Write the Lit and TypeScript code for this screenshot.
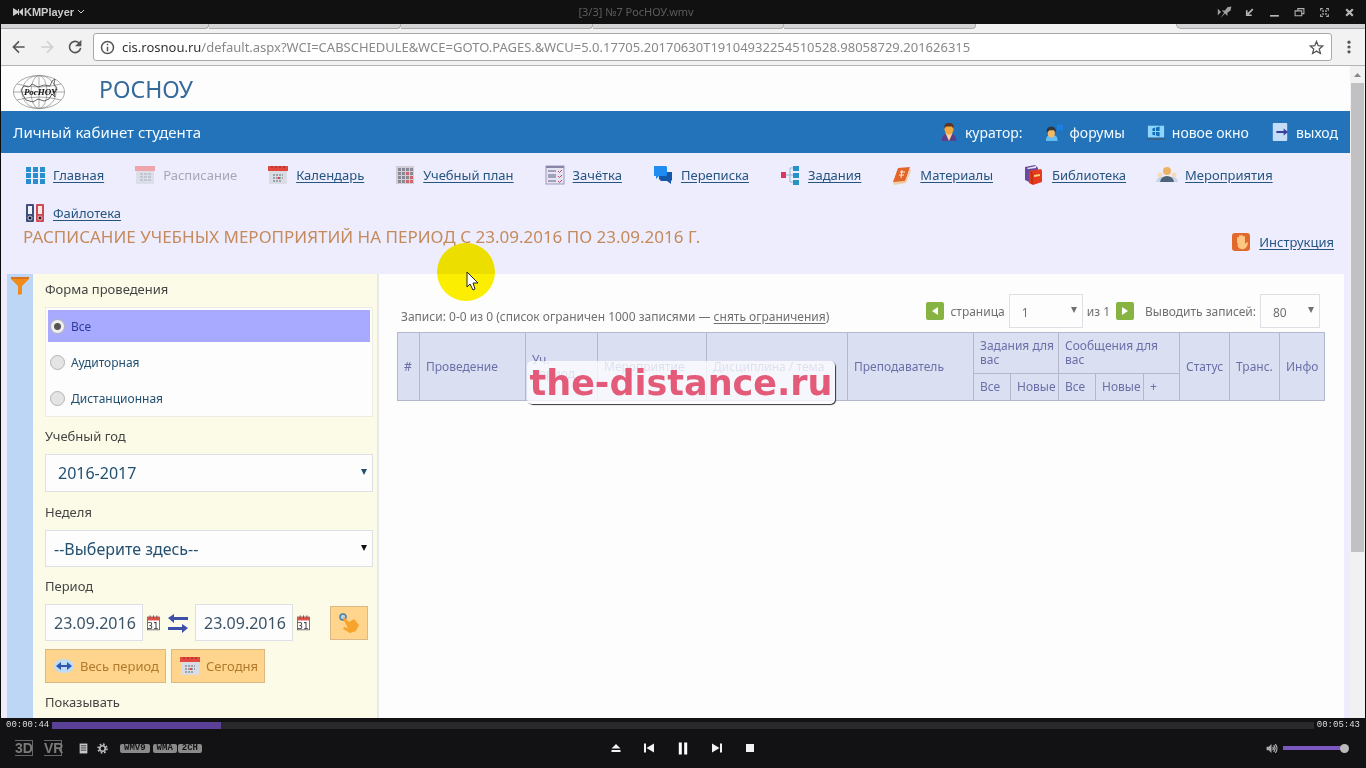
import { LitElement, html, svg, css } from "lit";
import { customElement, property, state } from "lit/decorators.js";
import { classMap } from "lit/directives/class-map.js";

const glyphs: Record<string, unknown> = {
  grid: svg`${[0, 1, 2].map((r) => [0, 1, 2].map((c) => svg`<rect x=${1 + c * 7} y=${2 + r * 6} width="5" height="5" fill="#2a8fd0"/>`))}`,
  schedule: svg`<rect x="1" y="5" width="18" height="14" rx="1" fill="#dcdfe8"/><path d="M0 1h20v5H0z" fill="#f0a5ab"/><path d="M5 9h11M5 12h11M5 15h11" stroke="#c2c6d2" stroke-width="2" stroke-dasharray="3 1"/>`,
  calendar: svg`<rect x="1" y="5" width="18" height="14" rx="1" fill="#d9dde3"/><path d="M0 1h20v5H0z" fill="#e2483d"/><path d="M4 1v2M8 1v2M12 1v2M16 1v2" stroke="#8e2b25"/><path d="M5 10h10M5 13h10M5 16h8" stroke="#9aa3ad" stroke-width="2" stroke-dasharray="2 1"/><path d="M10 12h2v2h-2z" fill="#e2483d"/>`,
  plan: svg`<rect x="1" y="1" width="18" height="18" fill="#d3ced6"/>${[0, 1, 2, 3].map((r) => [0, 1, 2, 3].map((c) => svg`<rect x=${3 + c * 4} y=${3 + r * 4} width="3" height="3" fill=${(r === 1 && c === 2) || (r === 3 && c > 1) || (r === 2 && c === 3) ? "#d06468" : "#8a8a96"}/>`))}`,
  grades: svg`<rect x="1" y="1" width="18" height="18" fill="#e6e4f2" stroke="#9f98bd"/><path d="M1 2h18" stroke="#8a84a8" stroke-width="2"/><path d="M3 6h8M3 10h8M3 12h8M3 16h8" stroke="#5f5f86"/><path d="m13 6 1.500 1.500L17 5m-4 6 1.500 1.500L17 10m-4 6 1.500 1.500L17 15" fill="none" stroke="#b54c6c"/>`,
  chat: svg`<path d="M6 7h13v8l-1 1v3l-4-3H8l-2-2z" fill="#1557a8"/><path d="M1 1h12l1 1v8l-1 1H6l-3 3v-3H1z" fill="#1e8cf0"/>`,
  tasks: svg`<rect x="1" y="7" width="5" height="6" fill="#e0335f"/><path d="M6 10h7M10 3v14M10 3h3M10 17h3" stroke="#8fb9d6" fill="none"/><path d="M13 1h6v5h-6zm0 7h6v5h-6zm0 7h6v5h-6z" fill="#2892c4"/>`,
  materials: svg`<path d="m6 3 12-1-5 15H1z" fill="#e2662b"/><path d="m1 17 12-1 5-12 1 2-5 12-12 2z" fill="#f0cda6"/><path d="M8 7h5M7 10h5M10 5l-1 8" stroke="#fff0d8" fill="none"/>`,
  library: svg`<path d="m1 2 10-2 3 3v12L5 17 1 15z" fill="#6a4a9f"/><path d="M3 3 12 1v2L4 4z" fill="#eee"/><path d="m5 6 12-2 1 2v11l-9 3-4-2z" fill="#e63b1f"/><path d="m6 7 2 1v11" stroke="#a82613" fill="none"/><path d="m10 10 6-1v2l-6 1z" fill="#ffd27a"/>`,
  people: svg`<circle cx="3" cy="10" r="2.500" fill="#f3dcb8"/><circle cx="17" cy="10" r="2.500" fill="#f3dcb8"/><path d="M-1 17q1-5 5-5h12q4 0 5 5z" fill="#c7d5e4"/><circle cx="10" cy="6" r="4" fill="#eab464"/><path d="M3 17q1-6 7-6t7 6z" fill="#4e6378"/>`,
  binders: svg`<rect x="1" y="1" width="8" height="18" rx="1" fill="#3f4e7d"/><rect x="3" y="3" width="4" height="8" fill="#f2f2fa"/><circle cx="5" cy="15" r="2" fill="#10142a" stroke="#c8cce0"/><rect x="11" y="1" width="8" height="18" rx="1" fill="#cf4a55"/><rect x="13" y="3" width="4" height="8" fill="#fbe9e6"/><circle cx="15" cy="15" r="2" fill="#401016" stroke="#e8c8cc"/>`,
  hand: svg`<rect x="1" y="1" width="18" height="18" rx="3" fill="#e2692c"/><path d="M6 11V6q0-1 1-1t1 1v3-5q0-1 1-1t1 1v5-5q0-1 1-1t1 1v5-4q0-1 1-1t1 1v7q2-3 3-1-1 5-4 6-4 1-6-2-1-2 0-4z" fill="#ffc583"/>`,
  curator: svg`<path d="M2 20q0-7 5-8h6q5 1 5 8z" fill="#5a3f8c"/><path d="m6 11 4 9 4-9z" fill="#f9d3a0"/><ellipse cx="10" cy="7" rx="5" ry="6" fill="#f2a840"/><path d="M5 6q-1-6 5-6t5 6l-2-2H7z" fill="#5b3420"/>`,
  forum: svg`<path d="M13 2h7v6h-4l-2 2V8h-1z" fill="#1a80e0"/><path d="M1 20q0-6 4-6h5q4 0 4 6z" fill="#62bdf2"/><ellipse cx="7" cy="11" rx="4" ry="5" fill="#f5b862"/><path d="M2 11q-1-7 5-7t5 7l-2-3H5z" fill="#33363c"/>`,
  window: svg`<rect x="1" y="3" width="18" height="13" fill="#8fd4fb"/><path d="m6 6 3-1v4H6zm4-1 4-1v5h-4zm-4 5h3v4l-3-1zm4 0h4v5l-4-1z" fill="#0f6fbd"/><path d="M0 17h20l-1 2H1z" fill="#3d5f80"/>`,
  exit: svg`<rect x="2" y="0" width="16" height="20" rx="1" fill="#c3dcf8"/><path d="M6 9h8V6l5 4-5 4v-3H6z" fill="#39409b"/>`,
  filter: svg`<path d="M1 1h18v2l-7 7v8l-4 1v-9L1 3z" fill="#f08c1c"/><path d="M1 1h18v2H1z" fill="#d9741a"/>`,
  day: svg`<rect x="3" y="3" width="14" height="15" fill="#fdfdfd" stroke="#6b5a5a"/><path d="M3 3h14v4H3z" fill="#e0564c"/><path d="M6 1v4M10 1v4M14 1v4" stroke="#874040"/>`,
  swap: svg`<path d="M0 5 6 1v3h14v3H6v3zM20 15l-6-4v3H0v3h14v3z" fill="#3d50a8"/>`,
  pointer: svg`<circle cx="4" cy="4" r="3" fill="#b9d4e8" stroke="#4a7ea8" stroke-width="1.500"/><path d="m5 4 5 5 5-3 5 6-3 6-6 2-7-4 1-2 4 1-5-9z" fill="#f7a42c"/>`,
  range: svg`<ellipse cx="10" cy="10" rx="10" ry="7" fill="#bfdcf5"/><path d="m2 10 5-4v3h6V6l5 4-5 4v-3H7v3z" fill="#3156b0"/>`,
  back: svg`<path d="M17 10H4m6-7-7 7 7 7" fill="none" stroke="#555" stroke-width="2"/>`,
  forward: svg`<path d="M3 10h13m-6-7 7 7-7 7" fill="none" stroke="#d0d0d0" stroke-width="2"/>`,
  reload: svg`<path d="M15 5a7 7 0 1 0 2 6" fill="none" stroke="#555" stroke-width="2"/><path d="M18 1v8h-8z" fill="#555"/>`,
  info: svg`<circle cx="10" cy="10" r="8" fill="none" stroke="#555" stroke-width="2"/><path d="M10 5v2M10 9v6" stroke="#555" stroke-width="2"/>`,
  star: svg`<path d="m10 2 2.300 5.600 6 .5-4.600 4 1.500 5.900-5.200-3.200L4.800 18l1.500-5.900-4.600-4 6-.5z" fill="none" stroke="#555" stroke-width="1.700"/>`,
  dots: svg`<circle cx="10" cy="4" r="2" fill="#555"/><circle cx="10" cy="10" r="2" fill="#555"/><circle cx="10" cy="16" r="2" fill="#555"/>`,
  pin: svg`<path d="m1 6 4 4-4 4zM18 3l-1 5-4 3v4l-3-3-6 6 5-7-3-3h4l3-4z" fill="#a0a0a0"/>`,
  shrink: svg`<path d="M16 4 7 13M5 6v9h9" fill="none" stroke="#b8b8b8" stroke-width="3"/>`,
  min: svg`<path d="M2 16h16" stroke="#b8b8b8" stroke-width="3"/>`,
  restore: svg`<path d="M7 7V3h11v9h-4M2 7h12v9H2z" fill="none" stroke="#b0b0b0" stroke-width="2"/>`,
  full: svg`<path d="M3 7V3h4M13 3h4v4M17 13v4h-4M7 17H3v-4M7 9V7h2M11 7h2v2M13 11v2h-2M9 13H7v-2" fill="none" stroke="#a8a8a8" stroke-width="2"/>`,
  close: svg`<path d="m4 4 12 12M16 4 4 16" stroke="#b8b8b8" stroke-width="4"/>`,
  list: svg`<path d="M3 1h14v18H3z" fill="#c8c8c8"/><path d="M5 5h10M5 9h10M5 13h10" stroke="#222" stroke-width="1.500"/>`,
  gear: svg`<circle cx="10" cy="10" r="8" fill="none" stroke="#bbb" stroke-width="3" stroke-dasharray="3.140"/><circle cx="10" cy="10" r="5" fill="none" stroke="#bbb" stroke-width="3"/>`,
  eject: svg`<path d="m10 2 9 9H1zM1 14h18v4H1z" fill="#f2f2f2"/>`,
  prev: svg`<path d="M0 1h4v18H0zM20 1v18L5 10z" fill="#f2f2f2"/>`,
  pause: svg`<path d="M3 0h5v20H3zM12 0h5v20h-5z" fill="#fff"/>`,
  next: svg`<path d="M16 1h4v18h-4zM0 1v18l15-9z" fill="#f2f2f2"/>`,
  stop: svg`<path d="M2 2h16v16H2z" fill="#f2f2f2"/>`,
  sound: svg`<path d="M1 7h4l5-5v16l-5-5H1z" fill="#aaa"/><path d="M12 7q3 3 0 6M14 4q5 6 0 12M17 2q6 8 0 16" fill="none" stroke="#bbb" stroke-width="2"/>`,
};

@customElement("ui-icon")
class UiIcon extends LitElement {
  @property() name = "";
  static styles = css`
    :host { display: block; flex: none; width: 20px; height: 20px; }
    .icon { display: block; width: 100%; height: 100%; overflow: visible; }
  `;
  render() {
    return html`<svg class="icon" viewBox="0 0 20 20" aria-hidden="true">${glyphs[this.name]}</svg>`;
  }
}

@customElement("app-root")
class AppRoot extends LitElement {
  @state() private form = "Все";

  static styles = css`
    :host {
      display: flex; flex-direction: column; height: 100vh; overflow: hidden; position: relative;
      font-family: "Noto Sans", sans-serif; background: #0b0b0d; color: #444;
    }
    * { box-sizing: border-box; }
    button, input, select { font: inherit; color: inherit; margin: 0; border-radius: 0; }
    button { padding: 0; border: 0; background: none; display: flex; align-items: center; justify-content: center; }
    a { color: #245480; }

    .titlebar { display: flex; align-items: center; height: 24px; flex: none; padding: 0 4px 0 13px; background: #111; }
    .brand { display: flex; align-items: center; gap: 1px; font: bold 11px/20px "Liberation Sans", sans-serif; color: #ccc; }
    .brand-mark { width: 10px; height: 8px; }
    .brand-arrow { width: 6px; height: 4px; margin-left: 3px; }
    .file { flex: 1; text-align: center; padding-right: 24px; font: 11px/20px "Noto Sans", sans-serif; color: #5c5c5c; }
    .win { width: 25px; height: 24px; }
    .win ui-icon { width: 11px; height: 11px; }
    .win .wide { width: 16px; height: 16px; }

    .screen { flex: 1; min-height: 0; display: flex; flex-direction: column; margin: 0 1px; background: #fdfdfe; }
    .tabs { display: flex; flex: none; height: 5px; background: #f2f2f2; }
    .tab { flex: 193; background: #d3d3d5; border: 1px solid #aaa; border-width: 0 1px 1px 0; border-radius: 0 0 4px 0; }
    .tab.first { flex: 209; }
    .tab.gap { flex: 202; background: none; border: 0; }
    .tab.last { flex: 190; border-width: 0 0 1px 1px; border-radius: 0 0 0 5px; }
    .toolbar { display: flex; align-items: center; flex: none; height: 37px; padding: 0 8px 0 10px; background: #f2f2f2; border-bottom: 1px solid #b5b5b5; }
    .toolbar ui-icon { width: 16px; height: 16px; }
    .nav-btn { width: 28px; height: 28px; justify-content: flex-start; }
    .nav-btn:nth-child(3) { width: 26px; }
    .address { display: flex; align-items: center; flex: 1; height: 28px; margin-right: 9px; padding: 0 7px 0 6px; gap: 7px; background: #fff; border: 1px solid #aaa; border-radius: 3px; font-size: 13px; color: #888; }
    .address ui-icon { width: 15px; height: 15px; }
    .address-host { color: #333; }
    .url { flex: 1; white-space: nowrap; }

    .viewport { flex: 1; min-height: 0; display: flex; }
    .page { flex: 1; min-width: 0; overflow: hidden; display: flex; flex-direction: column; background: #eeedfd; }
    .scrollbar { width: 15px; flex: none; background: #f1f1f1; display: flex; flex-direction: column; align-items: center; }
    .scroll-up { width: 15px; height: 17px; }
    .scroll-arrow { width: 7px; height: 4px; }
    .thumb { width: 13px; height: 72%; background: #c1c1c4; }

    .org { display: flex; align-items: center; height: 45px; flex: none; padding-left: 12px; gap: 34px; background: #fdfdfe; }
    .org-logo { width: 52px; height: 34px; margin-top: 7px; }
    .org-mark { font: italic bold 9px "Liberation Serif", serif; }
    .org-name { margin: 0; font-size: 23px; font-weight: 400; line-height: 32px; color: #34699a; }
    .account { display: flex; align-items: center; height: 42px; flex: none; padding: 0 12px; background: #2273b9; color: #f4fbff; font-size: 15px; }
    .account-title { flex: 1; }
    .account-links { display: flex; gap: 22px; font-size: 14px; }
    .account-link { display: flex; align-items: center; gap: 7px; color: inherit; text-decoration: none; }
    .account-link ui-icon { width: 18px; height: 20px; }

    .menu { display: flex; flex-wrap: wrap; gap: 14px 31px; padding: 10px 24px 0; flex: none; }
    .menu-item { display: flex; align-items: center; gap: 8px; height: 24px; font-size: 13px; text-underline-offset: 2px; }
    .menu-item.off { color: #a7a7b4; text-decoration: none; }
    .heading { display: flex; justify-content: space-between; flex: none; height: 49px; padding: 0 16px 0 22px; }
    .heading-title { margin: 0; font-size: 17px; line-height: 24px; font-weight: 400; color: #c58a5c; }
    .help { display: flex; align-items: center; gap: 8px; height: 34px; font-size: 13px; text-underline-offset: 2px; }

    .work { flex: 1; min-height: 0; display: flex; margin: 0 6px; background: #fdfdfe; overflow: hidden; }
    .strip { width: 26px; flex: none; background: #bed6f6; align-items: flex-start; padding-top: 2px; }
    .filters { width: 346px; flex: none; padding: 4px 4px 0 12px; background: #fcfbe8; border-right: 2px solid #e8e8ea; font-size: 13px; color: #444; }
    .label { display: block; line-height: 22px; }
    .options { margin: 7px 0 8px; padding: 2px; border: 1px solid #ecece6; background: #fdfdfe; display: flex; flex-direction: column; gap: 4px; }
    .option { display: flex; align-items: center; gap: 6px; height: 32px; padding-left: 2px; font-size: 12px; color: #245070; }
    .option.on { background: #a7aafe; color: #2c3c9c; }
    .radio { appearance: none; width: 15px; height: 15px; border: 1px solid #b4b4b4; border-radius: 50%; background: #e4e4e4; }
    .radio:checked { background: radial-gradient(circle, #555 0 3px, #eee 4px); }
    .pick { position: relative; display: block; }
    .select { appearance: none; display: block; width: 100%; border: 1px solid #dde0e4; background: #fdfdfe; outline: 0; }
    .pick::after { content: ""; position: absolute; right: 6px; top: 50%; margin-top: -4px; border: 3px solid transparent; border-top: 6px solid currentColor; border-bottom: 0; }
    .pick.big { height: 38px; margin: 7px 0 9px; font-size: 16px; color: #245070; }
    .pick.week { height: 37px; margin-bottom: 8px; }
    .pick.week::after { color: #111; }
    .pick.big .select { height: 100%; padding: 0 12px; }
    .pick.week .select { padding: 0 8px; }
    .period { display: flex; align-items: center; gap: 2px; margin: 7px 0 8px; }
    .date { width: 98px; height: 37px; padding: 0 0 0 8px; border: 1px solid #dde0e4; background: #fdfdfe; font-size: 16px; color: #3c5468; }
    .day-btn { position: relative; width: 16px; height: 20px; font: 9px/10px "DejaVu Sans", sans-serif; color: #333; }
    .day-btn ui-icon { width: 17px; height: 18px; }
    .day-number { position: absolute; left: 0; right: 0; top: 8px; }
    .swap { margin: 0 5px; }
    .action { height: 34px; padding: 0 6px 0 8px; gap: 6px; background: #ffd48c; border: 1px solid #dcb886; font-size: 13px; color: #b0792c; }
    .action.apply { width: 38px; padding: 0; margin-left: 17px; }
    .actions { display: flex; gap: 5px; margin-bottom: 8px; }

    .content { flex: 1; min-width: 0; padding: 20px 21px 0 18px; font-size: 12px; color: #707070; }
    .list-bar { display: flex; align-items: center; height: 34px; margin: 0 3px 4px 4px; white-space: nowrap; }
    .records { flex: 1; align-self: flex-end; line-height: 22px; }
    .records a { color: inherit; text-underline-offset: 2px; }
    .page-btn { width: 18px; height: 18px; background: #87b343; border-radius: 2px; }
    .page-arrow { width: 6px; height: 8px; }
    .pager { display: flex; align-items: center; gap: 4px; }
    .pager .before { margin-left: 2px; }
    .pager .after { margin: 0 0 0 2px; }
    .size-label { margin-left: 7px; }
    .pick.small .select { width: 74px; height: 34px; padding: 2px 12px 0; }
    .pick.small.size .select { width: 60px; }

    .grid { width: 100%; table-layout: fixed; border-collapse: collapse; background: #dae0f2; color: #6b6fa8; line-height: 14px; }
    .grid th { border: 1px solid #b4b8cc; padding: 0 0 0 6px; font-weight: 400; text-align: left; }
    .grid .upper { height: 41px; }
    .grid .lower { height: 27px; }
    .w22 { width: 22px; } .w106 { width: 106px; } .w72 { width: 72px; } .w109 { width: 109px; } .w141 { width: 141px; }
    .w126 { width: 126px; } .w37 { width: 37px; } .w48 { width: 48px; } .w36 { width: 36px; } .w50 { width: 50px; } .w45 { width: 45px; }

    .player { flex: none; height: 50px; background: #121214; }
    .seek-row { display: flex; align-items: center; gap: 3px; height: 14px; padding: 0 6px; font: 9px/14px "Liberation Mono", monospace; color: #ddd; }
    .seek { flex: 1; height: 7px; background: #29292c; }
    .seek-done { height: 100%; background: #5a4096; }
    .controls { display: grid; grid-template-columns: 1fr auto 1fr; align-items: center; height: 32px; }
    .media-info { display: flex; align-items: center; padding-left: 15px; }
    .mode { font: bold 14px/14px "Liberation Sans", sans-serif; color: #7a7a7a; border: 1px solid #666; border-left: 0; height: 16px; width: 18px; margin-right: 11px; }
    .info-btn { width: 20px; height: 20px; }
    .info-btn + .info-btn { margin-left: -1px; }
    .info-btn ui-icon { width: 11px; height: 11px; }
    .codec { height: 9px; border-radius: 2px; padding: 0 4px; margin-left: 3px; background: #8a8a8a; color: #151515; font: bold 9px/9px "Liberation Mono", monospace; }
    .codec.first { margin-left: 8px; }
    .codec.second { margin-left: 1px; }
    .play { display: flex; gap: 23px; align-items: center; }
    .play ui-icon { width: 10px; height: 10px; }
    .play .main { width: 12px; height: 13px; }
    .volume { display: flex; justify-content: flex-end; align-items: center; gap: 5px; padding-right: 13px; }
    .volume ui-icon { width: 13px; height: 11px; }
    .volume-range { appearance: none; width: 70px; height: 12px; background: linear-gradient(#7b57c0, #7b57c0) 0 50% / 62px 4px no-repeat; }
    .volume-range::-webkit-slider-thumb { appearance: none; width: 9px; height: 9px; border-radius: 50%; background: #bbb; }

    .spot { position: absolute; left: 437px; top: 243px; width: 58px; height: 58px; border-radius: 50%; background: #fdf000; mix-blend-mode: multiply; }
    .cursor { position: absolute; left: 466px; top: 271px; width: 13px; height: 20px; }
    .watermark { position: absolute; left: 527px; top: 361px; width: 308px; height: 43px; border-radius: 5px; background: rgba(252, 252, 255, 0.8); box-shadow: 1px 1px 1px #333; text-align: center; font: bold 35px/44px "DejaVu Sans", sans-serif; color: #e35b78; }
  `;

  private menu = [
    ["grid", "Главная"], ["schedule", "Расписание"], ["calendar", "Календарь"], ["plan", "Учебный план"],
    ["grades", "Зачётка"], ["chat", "Переписка"], ["tasks", "Задания"], ["materials", "Материалы"],
    ["library", "Библиотека"], ["people", "Мероприятия"], ["binders", "Файлотека"],
  ];

  private titleBar() {
    return html`<header class="titlebar">
      <div class="brand">
        <svg class="brand-mark" viewBox="0 0 10 8"><path d="M0 0l5 3V1h1v6H5V5L0 8zM10 0v8L6 4z" fill="#ccc"/></svg>
        KMPlayer
        <svg class="brand-arrow" viewBox="0 0 6 4"><path d="m0 0 3 3 3-3" fill="none" stroke="#ccc"/></svg>
      </div>
      <div class="file">[3/3] №7 РосНОУ.wmv</div>
      ${["pin", "shrink", "min", "restore", "full", "close"].map((n) => html`<button class="win" aria-label=${n}><ui-icon class=${n === "pin" ? "wide" : ""} name=${n}></ui-icon></button>`)}
    </header>`;
  }

  private browserBar() {
    return html`<div class="tabs">
        ${["first", "", "", "", "", "gap", "last"].map((c) => html`<div class="tab ${c}"></div>`)}
      </div>
      <div class="toolbar">
        ${["back", "forward", "reload"].map((n) => html`<button class="nav-btn" aria-label=${n}><ui-icon name=${n}></ui-icon></button>`)}
        <div class="address">
          <ui-icon name="info"></ui-icon>
          <span class="url"><span class="address-host">cis.rosnou.ru</span>/default.aspx?WCI=CABSCHEDULE&amp;WCE=GOTO.PAGES.&amp;WCU=5.0.17705.20170630T19104932254510528.98058729.201626315</span>
          <ui-icon name="star"></ui-icon>
        </div>
        <button aria-label="menu"><ui-icon name="dots"></ui-icon></button>
      </div>`;
  }

  private filters() {
    return html`<form class="filters">
      <span class="label" id="form-label">Форма проведения</span>
      <div class="options" role="radiogroup" aria-labelledby="form-label">
        ${["Все", "Аудиторная", "Дистанционная"].map((t) => html`<label class=${classMap({ option: true, on: this.form === t })}>
          <input class="radio" type="radio" name="form" .checked=${this.form === t} @change=${() => (this.form = t)}>${t}</label>`)}
      </div>
      <label class="label" for="year">Учебный год</label>
      <div class="pick big"><select class="select" id="year"><option>2016-2017</option></select></div>
      <label class="label" for="week">Неделя</label>
      <div class="pick big week"><select class="select" id="week"><option>--Выберите здесь--</option></select></div>
      <label class="label" for="from">Период</label>
      <div class="period">
        <input class="date" id="from" value="23.09.2016">
        <button class="day-btn" type="button"><ui-icon name="day"></ui-icon><span class="day-number">31</span></button>
        <ui-icon class="swap" name="swap"></ui-icon>
        <input class="date" aria-label="Период по" value="23.09.2016">
        <button class="day-btn" type="button"><ui-icon name="day"></ui-icon><span class="day-number">31</span></button>
        <button class="action apply" type="button" aria-label="Применить"><ui-icon name="pointer"></ui-icon></button>
      </div>
      <div class="actions">
        <button class="action" type="button"><ui-icon name="range"></ui-icon>Весь период</button>
        <button class="action" type="button"><ui-icon name="calendar"></ui-icon>Сегодня</button>
      </div>
      <span class="label">Показывать</span>
    </form>`;
  }

  private pageArrow(d: string) {
    return html`<svg class="page-arrow" viewBox="0 0 6 8"><path d=${d} fill="#fff"/></svg>`;
  }

  private content() {
    return html`<main class="content">
      <div class="list-bar">
        <div class="records">Записи: 0-0 из 0 (список ограничен 1000 записями — <a href="#all">снять ограничения</a>)</div>
        <div class="pager">
          <button class="page-btn" aria-label="Назад">${this.pageArrow("M6 0v8L0 4z")}</button>
          <label class="before" for="page">страница</label>
          <div class="pick small"><select class="select" id="page"><option>1</option></select></div>
          <span>из 1</span>
          <button class="page-btn after" aria-label="Вперёд">${this.pageArrow("M0 0v8l6-4z")}</button>
          <label class="size-label" for="size">Выводить записей:</label>
          <div class="pick small size"><select class="select" id="size"><option>80</option></select></div>
        </div>
      </div>
      <table class="grid">
        <colgroup>${[22, 106, 72, 109, 141, 126, 37, 48, 37, 48, 36, 50, 50, 45].map((w) => html`<col class="w${w}">`)}</colgroup>
        <thead>
          <tr class="upper">
            ${["#", "Проведение", html`Уч.<br>период`, "Мероприятие", "Дисциплина / тема", "Преподаватель"].map((t) => html`<th rowspan="2">${t}</th>`)}
            <th colspan="2">Задания для вас</th><th colspan="3">Сообщения для<br>вас</th>
            ${["Статус", "Транс.", "Инфо"].map((t) => html`<th rowspan="2">${t}</th>`)}
          </tr>
          <tr class="lower">${["Все", "Новые", "Все", "Новые", "+"].map((t) => html`<th>${t}</th>`)}</tr>
        </thead>
      </table>
    </main>`;
  }

  private player() {
    return html`<footer class="player">
      <div class="seek-row"><span>00:00:44</span><div class="seek"><div class="seek-done" style="width:${(44 / 343) * 104}%"></div></div><span>00:05:43</span></div>
      <div class="controls">
        <div class="media-info">
          <span class="mode">3D</span><span class="mode">VR</span>
          <button class="info-btn" aria-label="Playlist"><ui-icon name="list"></ui-icon></button>
          <button class="info-btn" aria-label="Settings"><ui-icon name="gear"></ui-icon></button>
          <span class="codec first">WMV9</span><span class="codec">WMA</span><span class="codec second">2CH</span>
        </div>
        <div class="play">${["eject", "prev", "pause", "next", "stop"].map((n) => html`<button aria-label=${n}><ui-icon class=${n === "pause" ? "main" : ""} name=${n}></ui-icon></button>`)}</div>
        <div class="volume"><ui-icon name="sound"></ui-icon><input class="volume-range" type="range" aria-label="Volume" value="93"></div>
      </div>
    </footer>`;
  }

  render() {
    return html`${this.titleBar()}
      <div class="screen">
        ${this.browserBar()}
        <div class="viewport">
          <div class="page">
            <div class="org">
              <svg class="org-logo" viewBox="0 0 52 34">
                <g fill="none" stroke="#8a8a8a" stroke-width=".7"><ellipse cx="26" cy="17" rx="25.500" ry="16.500"/><ellipse cx="26" cy="17" rx="17" ry="16.500"/><ellipse cx="26" cy="17" rx="8" ry="16.500"/><path d="M26 0v34M0 17h52M4 9q22 6 44 0M4 25q22-6 44 0"/></g>
                <path d="m8 15 3-4 5 1 3-3 6 3 6-2 6 1 2-5 3-2-1 5 3 4-3 4 1 5-3-3-3 5-5 2-6-2-5 3-7-2-3-5z" fill="none" stroke="#444" stroke-width=".8"/>
                <text class="org-mark" x="11" y="20" fill="#111">РосНОУ</text>
              </svg>
              <h1 class="org-name">РОСНОУ</h1>
            </div>
            <div class="account">
              <span class="account-title">Личный кабинет студента</span>
              <nav class="account-links">
                ${[["curator", "куратор:"], ["forum", "форумы"], ["window", "новое окно"], ["exit", "выход"]].map(([i, t]) => html`<a class="account-link" href="#${i}"><ui-icon name=${i}></ui-icon>${t}</a>`)}
              </nav>
            </div>
            <nav class="menu">
              ${this.menu.map(([i, t]) => html`<a class=${classMap({ "menu-item": true, off: i === "schedule" })} href="#${i}"><ui-icon name=${i}></ui-icon>${t}</a>`)}
            </nav>
            <div class="heading">
              <h2 class="heading-title">РАСПИСАНИЕ УЧЕБНЫХ МЕРОПРИЯТИЙ НА ПЕРИОД С 23.09.2016 ПО 23.09.2016 Г.</h2>
              <a class="help" href="#help"><ui-icon name="hand"></ui-icon>Инструкция</a>
            </div>
            <div class="work">
              <button class="strip" aria-label="Фильтр"><ui-icon name="filter"></ui-icon></button>
              ${this.filters()}${this.content()}
            </div>
          </div>
          <div class="scrollbar">
            <button class="scroll-up" aria-label="Вверх"><svg class="scroll-arrow" viewBox="0 0 7 4"><path d="M0 4h7L3.500 0z" fill="#888"/></svg></button>
            <div class="thumb"></div>
          </div>
        </div>
      </div>
      ${this.player()}
      <div class="spot"></div>
      <svg class="cursor" viewBox="0 0 13 20"><path d="M1 1v15l3-3 3 6 2-1-2-6h5z" fill="#fff" stroke="#222"/></svg>
      <div class="watermark">the-distance.ru</div>`;
  }
}
